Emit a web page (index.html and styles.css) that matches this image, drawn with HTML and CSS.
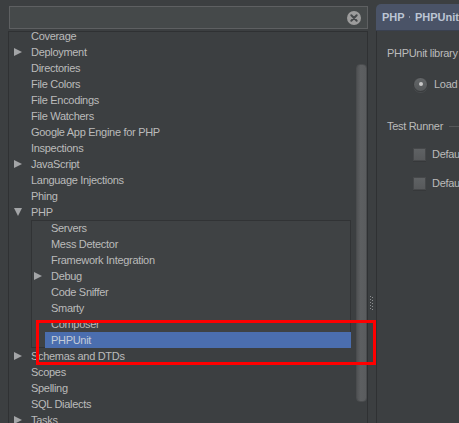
FILE: index.html
```html
<!DOCTYPE html>
<html>
<head>
<meta charset="utf-8">
<link rel="stylesheet" href="styles.css">
</head>
<body>
<div class="app">
  <div class="left">
    <div class="search">
      <svg class="clear" width="14" height="14" viewBox="0 0 14 14"><circle cx="7" cy="7" r="7" fill="#9c9c9c"/><path d="M4.3 4.3L9.7 9.7M9.7 4.3L4.3 9.7" stroke="#46494b" stroke-width="2" stroke-linecap="round"/></svg>
    </div>
    <div class="tree">
      <div class="list">
        <div class="rows">
          <div class="row"><span class="slot"></span><span class="lbl">Coverage</span></div>
          <div class="row"><span class="slot"><i class="tri-r"></i></span><span class="lbl">Deployment</span></div>
          <div class="row"><span class="slot"></span><span class="lbl">Directories</span></div>
          <div class="row"><span class="slot"></span><span class="lbl">File Colors</span></div>
          <div class="row"><span class="slot"></span><span class="lbl">File Encodings</span></div>
          <div class="row"><span class="slot"></span><span class="lbl">File Watchers</span></div>
          <div class="row"><span class="slot"></span><span class="lbl">Google App Engine for PHP</span></div>
          <div class="row"><span class="slot"></span><span class="lbl">Inspections</span></div>
          <div class="row"><span class="slot"><i class="tri-r"></i></span><span class="lbl">JavaScript</span></div>
          <div class="row"><span class="slot"></span><span class="lbl">Language Injections</span></div>
          <div class="row"><span class="slot"></span><span class="lbl">Phing</span></div>
          <div class="row"><span class="slot"><i class="tri-d"></i></span><span class="lbl">PHP</span></div>
          <div class="group">
            <div class="row child"><span class="cslot"></span><span class="clbl">Servers</span></div>
            <div class="row child"><span class="cslot"></span><span class="clbl">Mess Detector</span></div>
            <div class="row child"><span class="cslot"></span><span class="clbl">Framework Integration</span></div>
            <div class="row child"><span class="cslot"><i class="tri-r"></i></span><span class="clbl">Debug</span></div>
            <div class="row child"><span class="cslot"></span><span class="clbl">Code Sniffer</span></div>
            <div class="row child"><span class="cslot"></span><span class="clbl">Smarty</span></div>
            <div class="row child"><span class="cslot"></span><span class="clbl">Composer</span></div>
            <div class="row child"><span class="cslot"></span><span class="clbl sel">PHPUnit</span></div>
          </div>
          <div class="row"><span class="slot"><i class="tri-r"></i></span><span class="lbl">Schemas and DTDs</span></div>
          <div class="row"><span class="slot"></span><span class="lbl">Scopes</span></div>
          <div class="row"><span class="slot"></span><span class="lbl">Spelling</span></div>
          <div class="row"><span class="slot"></span><span class="lbl">SQL Dialects</span></div>
          <div class="row"><span class="slot"><i class="tri-r"></i></span><span class="lbl">Tasks</span></div>
        </div>
      </div>
      <div class="vscroll"><div class="thumb"></div></div>
    </div>
  </div>
  <div class="splitter">
    <svg class="grip" width="5" height="16" viewBox="0 0 5 16">
      <g fill="#8d8f91">
        <rect x="1" y="0" width="1" height="1"/><rect x="3" y="1" width="1" height="1"/>
        <rect x="1" y="3" width="1" height="1"/><rect x="3" y="4" width="1" height="1"/>
        <rect x="1" y="6" width="1" height="1"/><rect x="3" y="7" width="1" height="1"/>
        <rect x="1" y="9" width="1" height="1"/><rect x="3" y="10" width="1" height="1"/>
        <rect x="1" y="12" width="1" height="1"/><rect x="3" y="13" width="1" height="1"/>
      </g>
    </svg>
  </div>
  <div class="right">
    <div class="crumb">PHP<svg class="crumb-arrow" width="5" height="8" viewBox="0 0 5 8"><path d="M0 0L5 4L0 8Z" fill="#aab3c2"/></svg>PHPUnit</div>
    <div class="content">
      <div class="line">PHPUnit library</div>
      <div class="opt radio-row"><span class="radio"><span class="dot"></span></span><span>Load</span></div>
      <div class="line sep-row"><span>Test Runner</span><span class="rule"></span></div>
      <div class="opt cb-row1"><span class="cb"></span><span>Default</span></div>
      <div class="opt cb-row2"><span class="cb"></span><span>Default</span></div>
    </div>
  </div>
</div>
<div class="annot"></div>
</body>
</html>
```

FILE: styles.css
```css
* { box-sizing: border-box; }
html, body {
  margin: 0;
  padding: 0;
  background: #3c3f41;
  overflow: hidden;
}
body {
  width: 459px;
  height: 423px;
  position: relative;
  font-family: "Liberation Sans", Arial, sans-serif;
  font-size: 11px;
  letter-spacing: -0.3px;
  color: #bbbbbb;
}
.app {
  display: flex;
  height: 423px;
}
.left {
  width: 368px;
  flex: none;
  padding-left: 8px;
  display: flex;
  flex-direction: column;
}
.search {
  margin: 6px 0 0 1px;
  width: 359px;
  height: 23px;
  border: 1px solid #5e6062;
  background: #45494a;
  display: flex;
  align-items: center;
  justify-content: flex-end;
  padding-right: 6px;
}
.clear { display: block; }
.tree {
  margin-top: 2px;
  flex: 1;
  border-top: 1px solid #2f3133;
  border-left: 1px solid #2f3133;
  border-right: 1px solid #2f3133;
  display: flex;
  overflow: hidden;
}
.list {
  flex: 1;
  overflow: hidden;
}
.rows { margin-top: -4px; }
.row {
  height: 16px;
  display: flex;
  align-items: center;
  white-space: nowrap;
}
.slot {
  width: 22px;
  flex: none;
  height: 16px;
  display: flex;
  align-items: center;
  padding-left: 5px;
}
.lbl { line-height: 16px; }
.tri-r {
  display: block;
  width: 0; height: 0;
  border-top: 4.5px solid transparent;
  border-bottom: 4.5px solid transparent;
  border-left: 8px solid #a3a5a7;
}
.tri-d {
  display: block;
  width: 0; height: 0;
  border-left: 4.5px solid transparent;
  border-right: 4.5px solid transparent;
  border-top: 8px solid #a3a5a7;
}
.group {
  margin-left: 22px;
  margin-right: 5px;
  background: #3f4244;
  box-shadow: inset 0 0 0 1px #313335;
}
.cslot {
  width: 14px;
  flex: none;
  height: 16px;
  display: flex;
  align-items: center;
  padding-left: 3px;
}
.clbl {
  flex: 1;
  height: 16px;
  line-height: 16px;
  padding-left: 6px;
}
.clbl.sel {
  background: #4b6eaf;
  color: #c3cbd8;
}
.vscroll {
  width: 11px;
  flex: none;
  padding-top: 32px;
}
.thumb {
  width: 11px;
  height: 338px;
  border-radius: 4px;
  background: linear-gradient(to right, #505254, #5d5f61 40%, #5a5c5e);
  border: 1px solid #4a4c4e;
}
.splitter {
  width: 8px;
  flex: none;
  padding: 296px 0 0 1px;
}
.grip { display: block; }
.right {
  flex: 1;
  display: flex;
  flex-direction: column;
  min-width: 0;
}
.crumb {
  margin-top: 4px;
  height: 27px;
  background: #4a5367;
  border-radius: 5px 0 0 0;
  padding-left: 6px;
  display: flex;
  align-items: center;
  font-weight: bold;
  font-size: 11px;
  letter-spacing: 0;
  color: #bcc5d4;
  white-space: nowrap;
  border-bottom: 1px solid #3a4150;
}
.crumb-arrow { margin: 0 5px 0 4px; display: block; }
.content {
  flex: 1;
  border-left: 1px solid #2f3133;
  padding-left: 10px;
  white-space: nowrap;
}
.line {
  height: 16px;
  line-height: 16px;
  display: flex;
  align-items: center;
}
.content > .line:first-child { margin-top: 14px; }
.opt {
  height: 16px;
  display: flex;
  align-items: center;
  padding-left: 26px;
}
.radio-row { margin-top: 15px; }
.radio {
  width: 15px;
  height: 15px;
  border-radius: 50%;
  background: linear-gradient(#626567, #55585a);
  border: 1px solid #3a3c3e;
  box-shadow: 0 1px 0 #4a4d4f;
  display: flex;
  align-items: center;
  justify-content: center;
  margin-right: 6px;
  flex: none;
}
.dot {
  width: 4px;
  height: 4px;
  border-radius: 50%;
  background: #c8c8c8;
}
.sep-row { margin-top: 26px; }
.rule {
  flex: 1;
  height: 1px;
  background: #555759;
  margin-left: 6px;
}
.cb-row1 { margin-top: 12px; }
.cb-row2 { margin-top: 13px; }
.cb {
  width: 13px;
  height: 13px;
  background: linear-gradient(#5f6264, #57595b);
  border: 1px solid #46484a;
  box-shadow: 0 1px 0 #36383a;
  margin-right: 6px;
  flex: none;
}
.annot {
  position: absolute;
  left: 36px;
  top: 320px;
  width: 340px;
  height: 45px;
  border: 3px solid #ff0000;
}
```
